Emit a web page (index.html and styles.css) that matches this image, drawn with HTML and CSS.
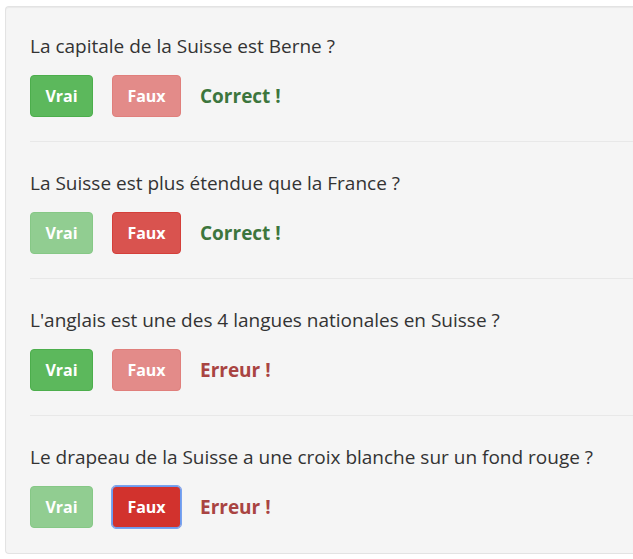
FILE: index.html
```html
<!DOCTYPE html>
<html lang="fr">
<head>
    <meta charset="UTF-8">
    <meta name="viewport" content="width=device-width, initial-scale=1.0">
    <title>Quiz Suisse</title>
    <link rel="stylesheet" href="styles.css">
</head>
<body>
    <div class="well">
        <div class="item">
            <p class="question">La capitale de la Suisse est Berne ?</p>
            <div class="answers">
                <button class="btn btn-true">Vrai</button>
                <button class="btn btn-false faded">Faux</button>
                <span class="result correct">Correct !</span>
            </div>
        </div>
        <div class="item">
            <p class="question">La Suisse est plus étendue que la France ?</p>
            <div class="answers">
                <button class="btn btn-true faded">Vrai</button>
                <button class="btn btn-false">Faux</button>
                <span class="result correct">Correct !</span>
            </div>
        </div>
        <div class="item">
            <p class="question">L'anglais est une des 4 langues nationales en Suisse ?</p>
            <div class="answers">
                <button class="btn btn-true">Vrai</button>
                <button class="btn btn-false faded">Faux</button>
                <span class="result wrong">Erreur !</span>
            </div>
        </div>
        <div class="item">
            <p class="question">Le drapeau de la Suisse a une croix blanche sur un fond rouge ?</p>
            <div class="answers">
                <button class="btn btn-true faded">Vrai</button>
                <button class="btn btn-false focused">Faux</button>
                <span class="result wrong">Erreur !</span>
            </div>
        </div>
    </div>
</body>
</html>
```

FILE: styles.css
```css
body {
    margin: 0;
    padding: 6px 0 0 5px;
    background: #fff;
    font-family: "Open Sans", sans-serif;
    color: #333;
}
.well {
    padding: 0 0 0 24px;
    background: #f5f5f5;
    border: 1px solid #e3e3e3;
    border-right: none;
    border-radius: 4px 0 0 4px;
    box-shadow: inset 0 1px 1px rgba(0, 0, 0, 0.05);
}
.item {
    padding: 26px 0 24px;
    border-bottom: 1px solid #e8e8e8;
}
.item + .item {
    padding-top: 28px;
}
.item:last-child {
    border-bottom: none;
    padding-bottom: 25px;
}
.question {
    margin: 0 0 16px;
    font-size: 19px;
    line-height: 26px;
}
.answers {
    display: flex;
    align-items: center;
    gap: 19px;
}
.btn {
    font-family: inherit;
    font-size: 16px;
    font-weight: bold;
    line-height: 24px;
    height: 42px;
    padding: 8px 0;
    color: #fff;
    border: 1px solid transparent;
    border-radius: 4px;
    cursor: pointer;
}
.btn-true {
    width: 63px;
    background: #5cb85c;
    border-color: #4cae4c;
}
.btn-false {
    width: 69px;
    background: #d9534f;
    border-color: #d43f3a;
}
.btn-true.faded {
    background: #91cd91;
    border-color: #86c886;
}
.btn-false.faded {
    background: #e38b89;
    border-color: #e07f7c;
}
.btn-false.focused {
    background: #d2322d;
    border-color: #6b9bf0;
    outline: 1px solid #7ba3ee;
}
.result {
    font-size: 19px;
    font-weight: bold;
}
.correct {
    color: #3c763d;
}
.wrong {
    color: #a94442;
}
```
